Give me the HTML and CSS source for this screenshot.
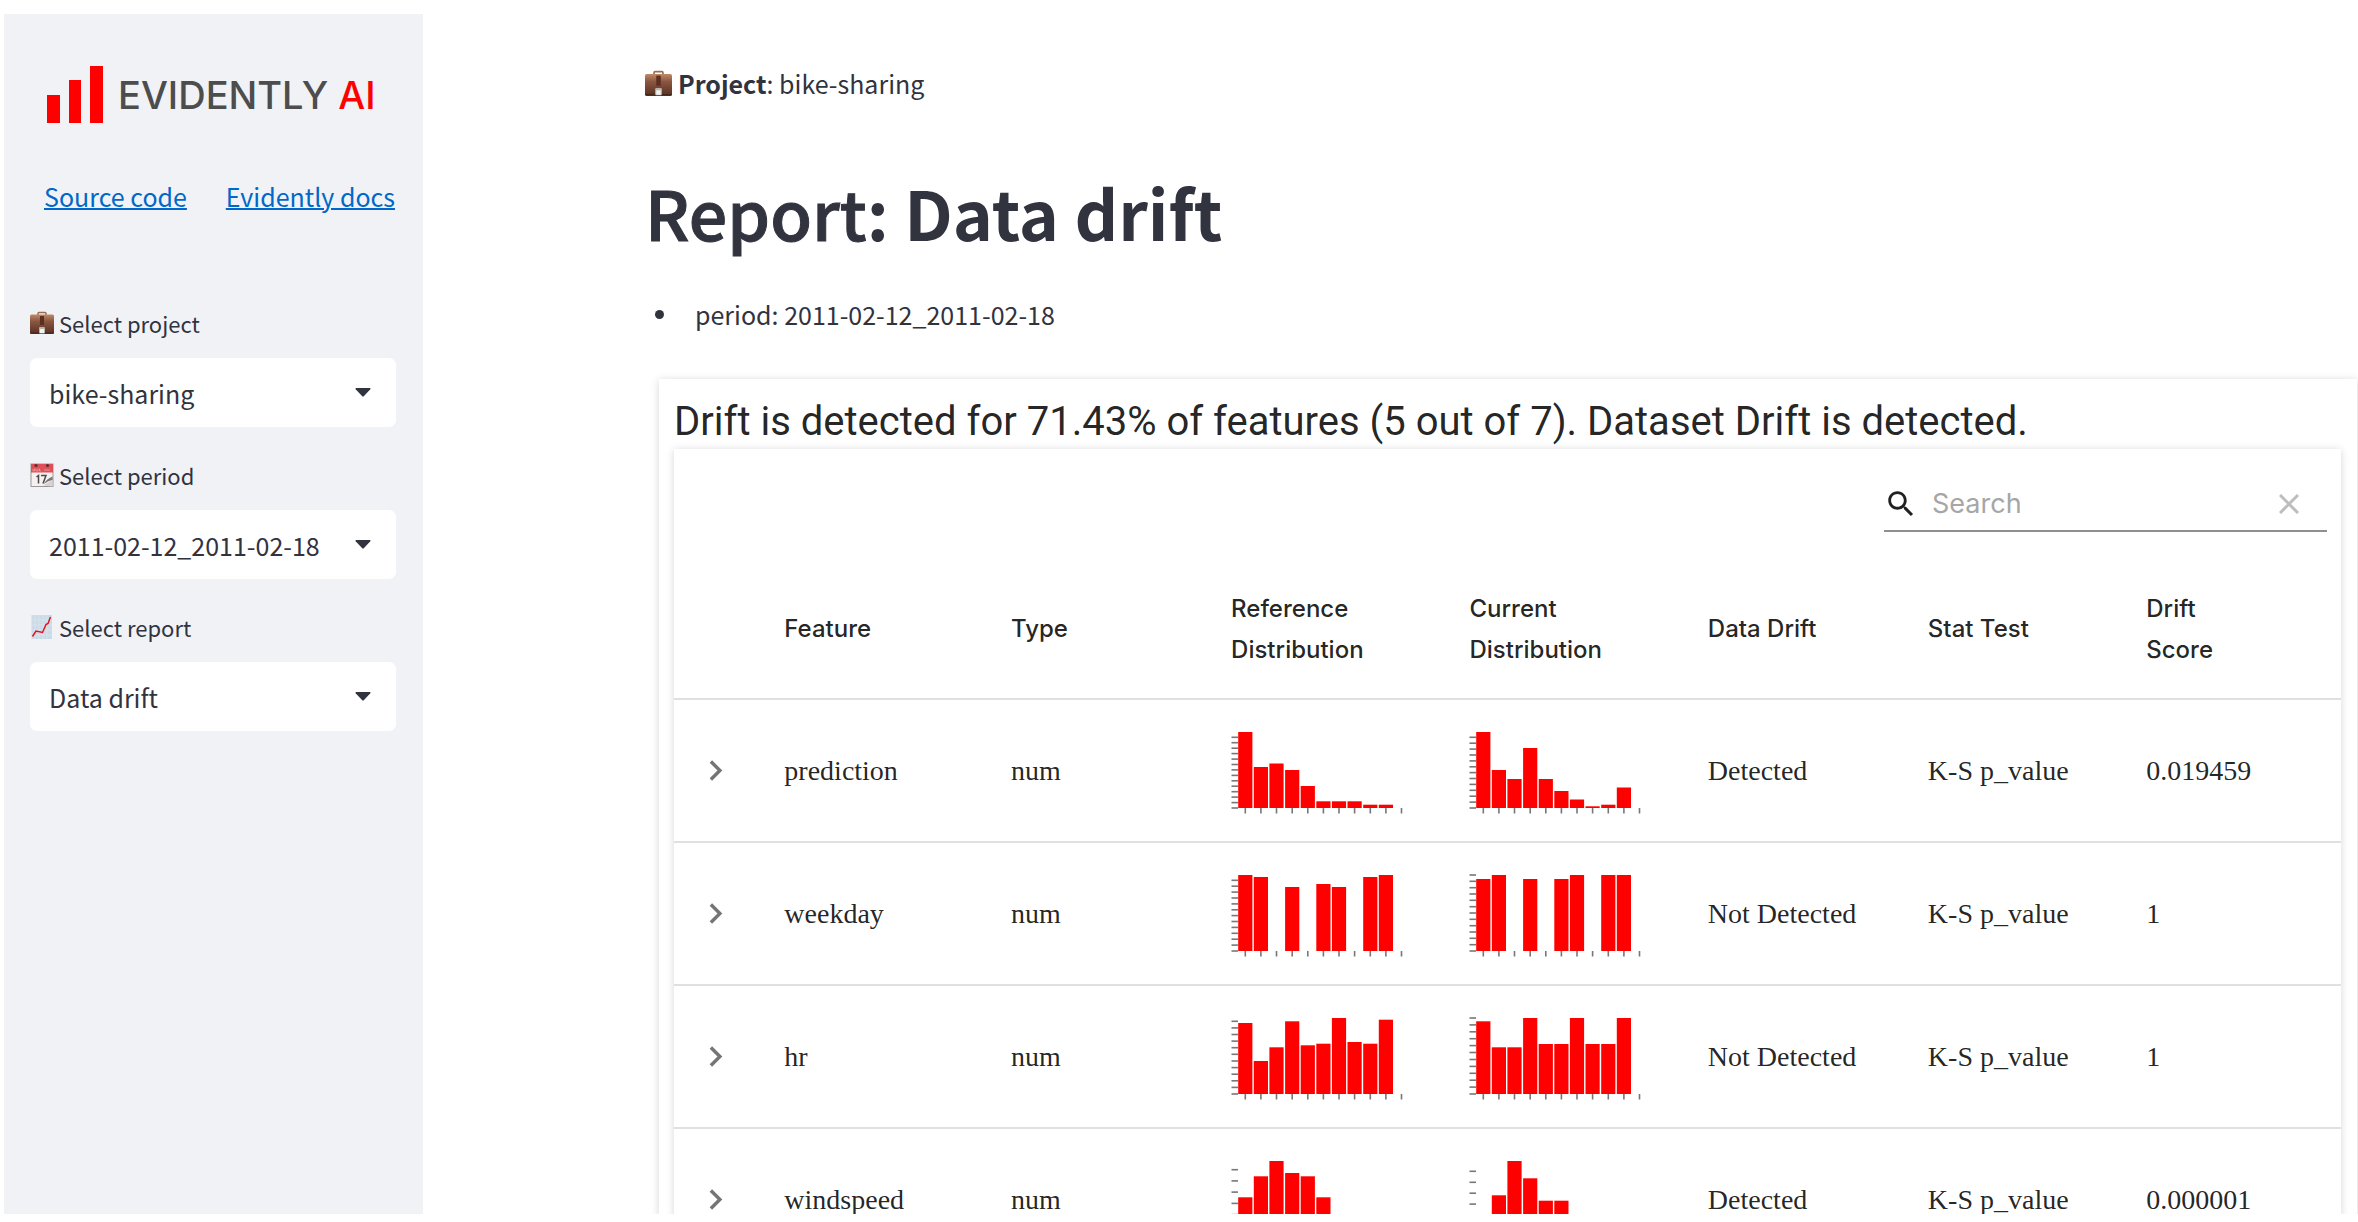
FILE: index.html
```html
<!DOCTYPE html>
<html lang="en">
<head>
<meta charset="utf-8">
<title>Evidently AI</title>
<link rel="stylesheet" href="styles.css">
</head>
<body>
<svg class="defs" aria-hidden="true">
  <defs>
    <linearGradient id="leather" x1="0" y1="0" x2="0" y2="1">
      <stop offset="0" stop-color="#c08a68"/><stop offset=".35" stop-color="#8a5640"/><stop offset="1" stop-color="#583022"/>
    </linearGradient>
    <symbol id="briefcase" viewBox="0 0 24 24">
      <path d="M8 4.500V2.600Q8 1.500 9 1.500H15Q16 1.500 16 2.600V4.500" fill="none" stroke="#9a6c52" stroke-width="1.500"/>
      <rect x="0" y="3.500" width="24" height="19.500" rx="1.500" fill="url(#leather)"/>
      <path d="M0 22H24" stroke="#44251a" stroke-width="1"/>
      <rect x="10" y="5" width="4" height="9" fill="#5e2f20"/>
      <rect x="9" y="16" width="6" height="6.500" rx="1" fill="#b9b3ae"/>
      <rect x="10" y="18" width="4" height="4" fill="#f2f2f2"/>
    </symbol>
    <symbol id="calendar" viewBox="0 0 24 24">
      <rect x="1" y="1" width="22" height="22.500" fill="#f4f1f0" stroke="#9b9896" stroke-width="1"/>
      <rect x="1" y="1" width="22" height="8.500" fill="#dd5057"/>
      <path d="M3 6V8H4.500V5.500M6 5.500V8H8V5.500M9.500 5.500V8H11M14 7H20" fill="none" stroke="#f0a0a2" stroke-width=".8"/>
      <circle cx="6" cy="2.500" r="1.600" fill="#553236"/><circle cx="17.500" cy="2.500" r="1.600" fill="#553236"/>
      <path d="M6.500 14L8.500 12.500V20.500M11 12.500H16L13 20.500" fill="none" stroke="#4a4a4a" stroke-width="1.500"/>
      <path d="M14 21Q16 16 22.500 13.500V17Q18 17.500 14 21Z" fill="#777"/>
      <path d="M13 22.500L22.500 17V23.500Z" fill="#d6d3d1"/>
    </symbol>
    <symbol id="trend" viewBox="0 0 24 24">
      <rect x="1.500" y="0" width="20.500" height="24" fill="#ccdbe8"/>
      <path d="M5 0V24M9 0V24M13 0V24M17 0V24M1.500 5H22M1.500 10H22M1.500 15H22M1.500 20H22" stroke="#dbe6ef" stroke-width=".8"/>
      <path d="M2.500 21.500L6 16L12.500 17.500L16 9.500L18 8.500L20.500 2" fill="none" stroke="#e8121c" stroke-width="1.500"/>
    </symbol>
    <symbol id="caret" viewBox="0 0 16 9">
      <path d="M1 0H15Q16 .5 15.300 1.300L9 8Q8 9 7 8L.7 1.300Q0 .5 1 0Z"/>
    </symbol>
    <symbol id="chevron" viewBox="0 0 24 24">
      <path d="M10 6L8.590 7.410 13.170 12l-4.580 4.590L10 18l6-6z"/>
    </symbol>
  </defs>
</svg>

<div class="app">
  <aside class="sidebar">
    <div class="logo">
      <svg class="logo-mark" viewBox="0 0 56 58" aria-hidden="true">
        <path d="M0 29H13V57H0ZM22 14H34V57H22ZM43 0H56V57H43Z"/>
      </svg>
      <span class="logo-text">EVIDENTLY <span class="logo-ai">AI</span></span>
    </div>
    <nav class="links">
      <a href="#source">Source code</a>
      <a href="#docs">Evidently docs</a>
    </nav>
    <form class="filters">
      <div class="field">
        <label for="project"><svg class="emoji"><use href="#briefcase"/></svg>Select project</label>
        <div class="select-box">
          <select id="project"><option>bike-sharing</option></select>
          <svg class="caret"><use href="#caret"/></svg>
        </div>
      </div>
      <div class="field">
        <label for="period"><svg class="emoji"><use href="#calendar"/></svg>Select period</label>
        <div class="select-box">
          <select id="period"><option>2011-02-12_2011-02-18</option></select>
          <svg class="caret"><use href="#caret"/></svg>
        </div>
      </div>
      <div class="field">
        <label for="report"><svg class="emoji"><use href="#trend"/></svg>Select report</label>
        <div class="select-box">
          <select id="report"><option>Data drift</option></select>
          <svg class="caret"><use href="#caret"/></svg>
        </div>
      </div>
    </form>
  </aside>

  <main class="main">
    <p class="project"><svg class="emoji emoji-large"><use href="#briefcase"/></svg><span><strong>Project</strong>: bike-sharing</span></p>
    <h1><span class="kind">Report</span>: Data drift</h1>
    <ul class="facts"><li>period: 2011-02-12_2011-02-18</li></ul>

    <section class="card">
      <h2>Drift is detected for 71.43% of features (5 out of 7). Dataset Drift is detected.</h2>
      <div class="table-card">
        <div class="toolbar">
          <div class="search">
            <svg class="search-icon" viewBox="0 0 24 24" aria-hidden="true"><path d="M15.500 14h-.79l-.28-.27C15.410 12.590 16 11.110 16 9.500 16 5.910 13.090 3 9.500 3S3 5.910 3 9.500 5.910 16 9.500 16c1.610 0 3.090-.59 4.230-1.570l.27.28v.79l5 4.990L20.490 19l-4.990-5zm-6 0C7.010 14 5 11.990 5 9.500S7.010 5 9.500 5 14 7.010 14 9.500 11.990 14 9.500 14z"/></svg>
            <input type="text" placeholder="Search" aria-label="Search">
            <button type="button" class="clear" aria-label="Clear search"><svg viewBox="0 0 20 20"><path d="M1 1L19 19M19 1L1 19"/></svg></button>
          </div>
        </div>
        <table>
          <colgroup>
            <col class="c-open"><col class="c-feature"><col class="c-type"><col class="c-chart"><col class="c-chart"><col class="c-drift"><col class="c-test"><col class="c-score">
          </colgroup>
          <thead>
            <tr><th></th><th>Feature</th><th>Type</th><th>Reference<br>Distribution</th><th>Current<br>Distribution</th><th>Data Drift</th><th>Stat Test</th><th>Drift<br>Score</th></tr>
          </thead>
          <tbody id="rows"></tbody>
        </table>
      </div>
    </section>
  </main>
</div>
<script src="charts.js"></script>
</body>
</html>
```
FILE: styles.css
```css
* { box-sizing: border-box; }

body {
  margin: 0;
  height: 100vh;
  padding: 14px 0 8px 4px;
  overflow: hidden;
  background: #fff;
  color: #31333f;
  font-family: "Noto Sans CJK SC", "Source Sans Pro", sans-serif;
  font-size: 25px;
}

.defs { position: absolute; width: 0; height: 0; }

.app { display: flex; height: 100%; overflow: hidden; }

.sidebar {
  flex: none;
  width: 419px;
  padding: 52px 27px 0 26px;
  background: #f0f2f6;
}

.logo { display: flex; align-items: center; gap: 15px; padding-left: 17px; height: 58px; }
.logo-mark { width: 56px; height: 58px; fill: #f00; }
.logo-text { font: 500 38px/48px Inter, sans-serif; color: #4d4d4d; white-space: nowrap; }
.logo-ai { color: #f00; }

.links {
  display: flex;
  justify-content: space-between;
  padding: 0 1px 0 14px;
  margin-top: 52px;
  line-height: 40px;
}
.links a { color: #0068c9; text-decoration-thickness: 2px; white-space: nowrap; }

.filters { display: flex; flex-direction: column; gap: 30px; margin-top: 89px; }
.field { display: flex; flex-direction: column; gap: 17px; }
label { display: flex; align-items: center; gap: 5px; font-size: 22px; line-height: 36px; }
.emoji { width: 24px; height: 24px; }
.emoji-large { width: 27px; height: 27px; }

.select-box { display: grid; align-items: center; }
.select-box > * { grid-area: 1 / 1; }
select {
  appearance: none;
  width: 100%;
  height: 69px;
  padding: 0 48px 0 19px;
  border: 0;
  border-radius: 7px;
  background: #fff;
  color: inherit;
  font: inherit;
}
.caret { justify-self: end; width: 16px; height: 9px; margin-right: 25px; fill: #31333f; pointer-events: none; }

.main { flex: 1; min-width: 0; padding: 49px 1px 0 222px; overflow: hidden; }

.project { display: flex; align-items: center; gap: 6px; margin: 0; line-height: 40px; }
h1 { margin: 61px 0 0; font-size: 68px; line-height: 96px; font-weight: 700; }
.kind { font-weight: 500; -webkit-text-stroke: 1px; }
.facts { margin: 34px 0 0; padding: 0 0 0 10px; list-style: none; line-height: 40px; }
.facts li { display: flex; align-items: center; gap: 31px; }
.facts li::before { content: ""; width: 9px; height: 9px; border-radius: 50%; background: currentColor; }

.card {
  margin: 45px 0 0 14px;
  padding: 16px 16px 27px 15px;
  background: #fff;
  color: rgba(0, 0, 0, .87);
  box-shadow: 0 3px 2px -2px rgba(0, 0, 0, .2), 0 1px 8px rgba(0, 0, 0, .16);
}
h2 { margin: 0; font: 400 40px/54px Roboto, sans-serif; white-space: nowrap; }

.table-card {
  background: #fff;
  box-shadow: 0 3px 2px -2px rgba(0, 0, 0, .2), 0 1px 8px rgba(0, 0, 0, .16);
}

.toolbar { display: flex; justify-content: flex-end; padding: 28px 14px 0 0; height: 110px; }
.search {
  display: flex;
  align-items: center;
  width: 443px;
  height: 55px;
  border-bottom: 2px solid #8f8f8f;
}
.search-icon { width: 34px; height: 34px; fill: #212121; }
.search input {
  flex: 1;
  min-width: 0;
  margin-left: 14px;
  padding: 0;
  border: 0;
  outline: 0;
  background: none;
  font: 400 27px/36px Inter, sans-serif;
}
.search input::placeholder { color: #a6a6a6; opacity: 1; }
.clear { display: flex; margin: 0 28px 0 0; padding: 0; border: 0; background: none; }
.clear svg { width: 20px; height: 20px; stroke: #bdbdbd; stroke-width: 3; fill: none; }

table { width: 100%; table-layout: fixed; border-collapse: collapse; }
.c-open { width: 5%; }
.c-feature { width: 13.6%; }
.c-type { width: 13.2%; }
.c-chart { width: 14.3%; }
.c-drift { width: 13.2%; }
.c-test { width: 13.1%; }
.c-score { width: 13.3%; }

th, td { padding: 0 0 0 27px; text-align: left; vertical-align: middle; border-bottom: 2px solid #e0e0e0; }
th { height: 140px; font: 500 24px/41px Inter, sans-serif; }
td { height: 143px; font: 400 28px/36px "Liberation Serif", serif; }

.open { display: flex; margin: 0; padding: 0; border: 0; background: none; }
.open svg { width: 41px; height: 41px; fill: #757575; margin-left: -6px; }

.chart { display: block; width: 176px; height: 80px; overflow: visible; }
.chart .bar { fill: #f00; }
.chart .tick { stroke: #777; stroke-width: 1.600; fill: none; }
```
FILE: charts.js
```js
// ticks: number of intervals on the y axis, top: height of the highest tick
const rows = [
  { name: "prediction", drift: "Detected", score: "0.019459",
    ref: { bars: [76, 41, 44.5, 38, 22, 6.7, 6.7, 6.7, 3.3, 3.3], ticks: 13, top: 70.7 },
    cur: { bars: [76, 38, 29, 60, 29, 17, 8.5, 1.7, 3.3, 20.5], ticks: 12, top: 70.7 } },
  { name: "weekday", drift: "Not Detected", score: "1",
    ref: { bars: [76, 74, 0, 64, 0, 67, 64, 0, 74, 76], ticks: 12, top: 70.7 },
    cur: { bars: [72, 76, 0, 72, 0, 72, 76, 0, 76, 76], ticks: 12, top: 76 } },
  { name: "hr", drift: "Not Detected", score: "1",
    ref: { bars: [71, 33, 46.7, 72.7, 48.7, 50.3, 76, 52, 50.3, 74.3], ticks: 11, top: 72.7 },
    cur: { bars: [72.7, 46.7, 46.7, 76, 50, 50, 76, 50, 50, 76], ticks: 11, top: 76 } },
  { name: "windspeed", drift: "Detected", score: "0.000001",
    ref: { bars: [39.7, 60.7, 76, 64, 60.7, 39.7, 0, 0, 0, 0], ticks: 6, top: 67.3 },
    cur: { bars: [0, 41.7, 76, 58.7, 36.3, 36.3, 0, 0, 0, 0], ticks: 6, top: 65.7 } },
];

const BASE = 77, FIRST = 14.3, PITCH = 15.62, BAR = 14.2;

function chart({ bars, ticks, top }) {
  let out = "";
  for (let i = 0; i <= ticks; i++) {
    out += `<path class="tick" d="M.5 ${(BASE - top * i / ticks).toFixed(1)}h6.500"/>`;
  }
  for (let i = 0; i <= bars.length; i++) {
    out += `<path class="tick" d="M${(FIRST + PITCH * i).toFixed(1)} ${BASE}v5.500"/>`;
  }
  bars.forEach((h, i) => {
    out += `<rect class="bar" x="${(FIRST + PITCH * i - BAR / 2).toFixed(1)}" y="${BASE - h}" width="${BAR}" height="${h}"/>`;
  });
  return `<svg class="chart" viewBox="0 0 176 80">${out}</svg>`;
}

document.getElementById("rows").innerHTML = rows.map(r => `<tr>
  <td><button type="button" class="open" aria-label="Show ${r.name}"><svg><use href="#chevron"/></svg></button></td>
  <td>${r.name}</td><td>num</td><td>${chart(r.ref)}</td><td>${chart(r.cur)}</td>
  <td>${r.drift}</td><td>K-S p_value</td><td>${r.score}</td></tr>`).join("");
```
